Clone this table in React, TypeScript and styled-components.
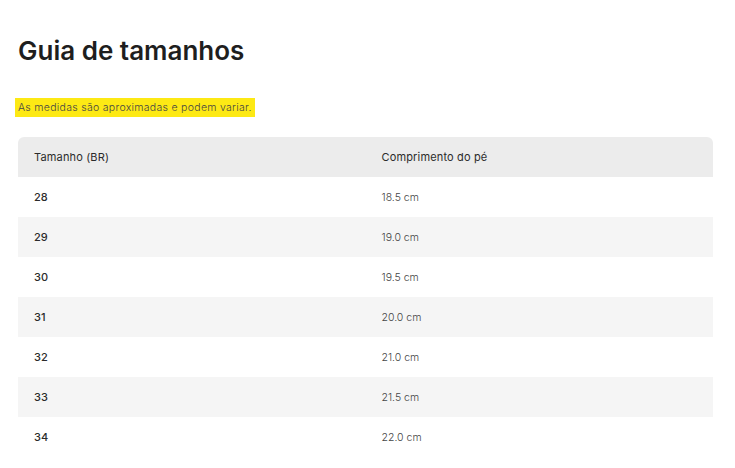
import React from "react";
import styled, { createGlobalStyle } from "styled-components";

const GlobalStyle = createGlobalStyle`
  html, body { margin: 0; padding: 0; background: #fff; }
  body { font-family: "Inter", "Open Sans", sans-serif; color: #222; }
`;

const Page = styled.div`
  padding: 34px 22px 0 18px;
`;

const Title = styled.h1`
  margin: 0;
  font-size: 26px;
  font-weight: 600;
  line-height: 34px;
  color: #1e1e1e;
`;

const Note = styled.p`
  margin: 30px 0 20px -3px;
  display: inline-block;
  background: #fde914;
  padding: 2px 3px;
  font-size: 10.5px;
  line-height: 15px;
  font-weight: 300;
  color: #444;
  letter-spacing: 0.3px;
`;

const Table = styled.div`
  width: 695px;
`;

const Row = styled.div<{ $bg: string; $head?: boolean }>`
  display: grid;
  grid-template-columns: 1fr 1fr;
  height: 40px;
  align-items: center;
  background: ${(p) => p.$bg};
  border-radius: ${(p) => (p.$head ? "6px 6px 0 0" : "0")};
`;

const Cell = styled.div<{ $kind: "head" | "size" | "len" }>`
  padding-left: 16px;
  font-size: ${(p) => (p.$kind === "len" ? "10.5px" : "11px")};
  font-weight: ${(p) => (p.$kind === "len" ? 300 : p.$kind === "size" ? 500 : 400)};
  color: ${(p) => (p.$kind === "len" ? "#444" : "#2b2b2b")};
  letter-spacing: ${(p) => (p.$kind === "head" ? "0.15px" : "0")};
`;

const data: [string, string][] = [
  ["28", "18.5 cm"],
  ["29", "19.0 cm"],
  ["30", "19.5 cm"],
  ["31", "20.0 cm"],
  ["32", "21.0 cm"],
  ["33", "21.5 cm"],
  ["34", "22.0 cm"],
];

export default function App() {
  return (
    <>
      <GlobalStyle />
      <Page>
        <Title>Guia de tamanhos</Title>
        <div>
          <Note>As medidas são aproximadas e podem variar.</Note>
        </div>
        <Table>
          <Row $bg="#ececec" $head>
            <Cell $kind="head">Tamanho (BR)</Cell>
            <Cell $kind="head">Comprimento do pé</Cell>
          </Row>
          {data.map(([s, l], i) => (
            <Row key={s} $bg={i % 2 === 0 ? "#ffffff" : "#f5f5f5"}>
              <Cell $kind="size">{s}</Cell>
              <Cell $kind="len">{l}</Cell>
            </Row>
          ))}
        </Table>
      </Page>
    </>
  );
}
